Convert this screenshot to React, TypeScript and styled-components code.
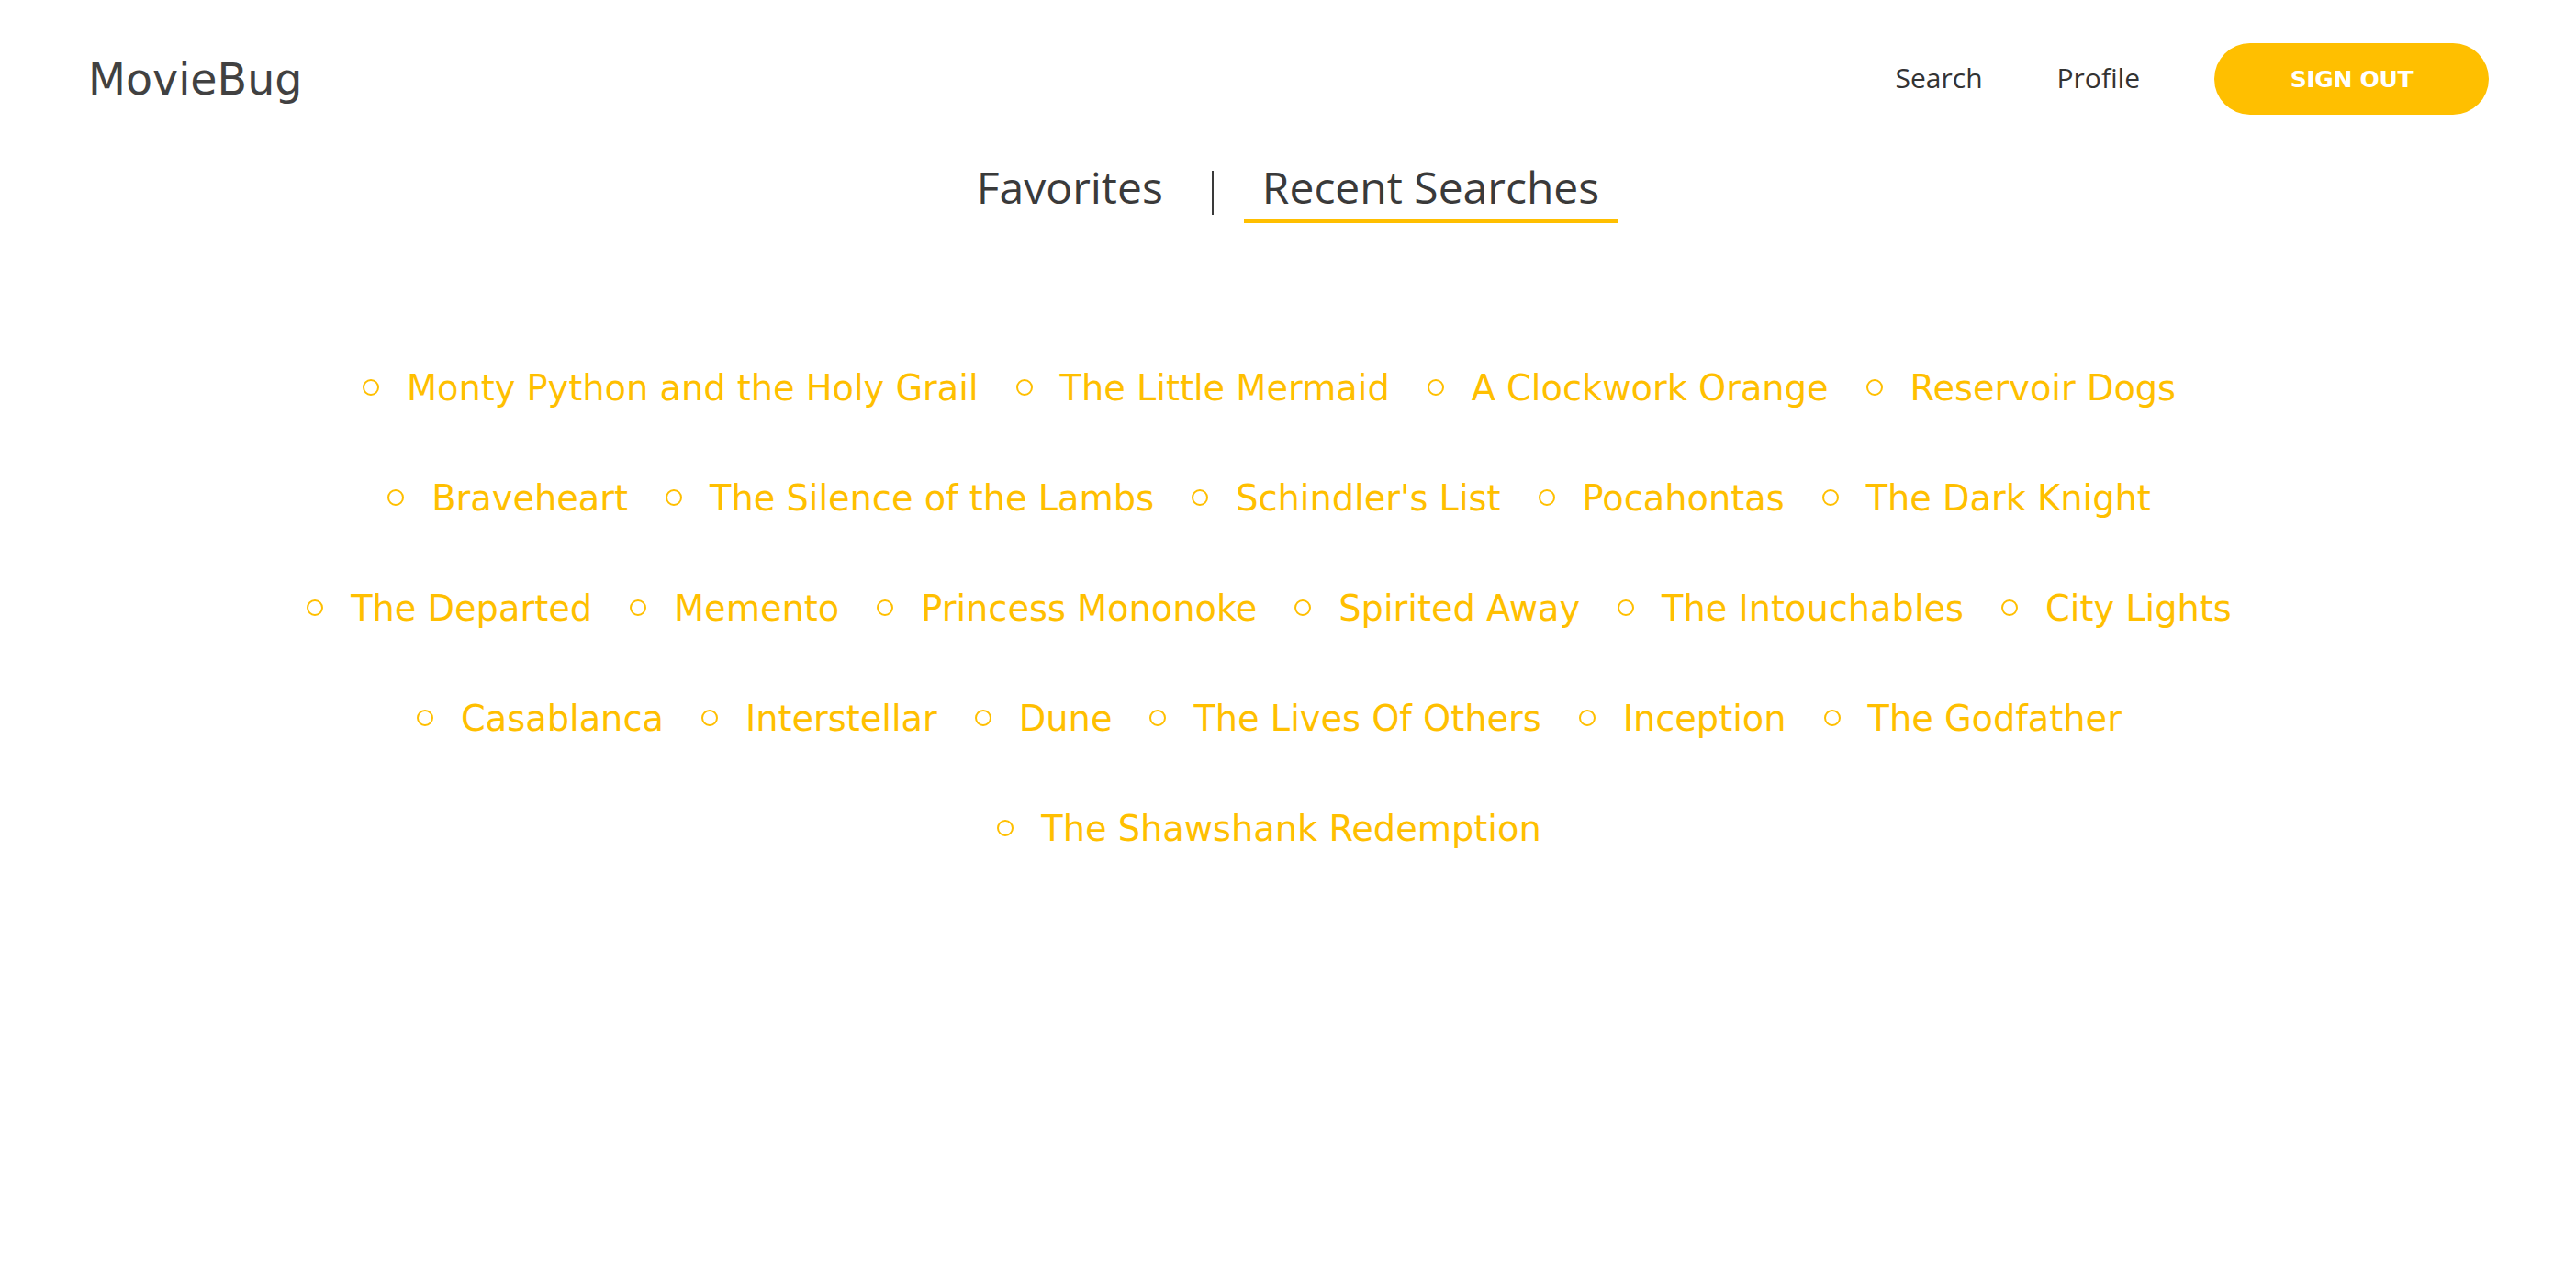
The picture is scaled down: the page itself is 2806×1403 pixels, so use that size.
import React from "react";
import styled, { createGlobalStyle } from "styled-components";

const GlobalStyle = createGlobalStyle`
  html, body {
    margin: 0;
    padding: 0;
    background: #ffffff;
  }
  body {
    font-family: "Open Sans", "Noto Sans", sans-serif;
    color: #3d3d3d;
  }
  * { box-sizing: border-box; }
`;

const YELLOW = "#ffbf00";

const Page = styled.div`
  min-height: 1403px;
  background: #ffffff;
`;

const Header = styled.header`
  display: flex;
  align-items: center;
  justify-content: space-between;
  height: 78px;
  margin-top: 47px;
  padding: 0 95px 0 96px;
`;

const Logo = styled.div`
  font-family: "DejaVu Sans", sans-serif;
  font-size: 47.5px;
  color: #414141;
`;

const Nav = styled.nav`
  display: flex;
  align-items: center;
  gap: 81px;
`;

const NavLink = styled.a`
  font-family: "Open Sans", sans-serif;
  font-size: 30px;
  line-height: 36px;
  margin-top: -3px;
  color: #333333;
  text-decoration: none;
  cursor: pointer;
`;

const SignOut = styled.button`
  width: 299px;
  height: 78px;
  border: none;
  border-radius: 39px;
  background: ${YELLOW};
  color: #ffffff;
  font-family: "DejaVu Sans", sans-serif;
  font-weight: 700;
  font-size: 25px;
  letter-spacing: -0.3px;
  cursor: pointer;
`;

const Tabs = styled.div`
  display: flex;
  justify-content: center;
  align-items: center;
  gap: 33px;
  margin-top: 47px;
`;

const Tab = styled.div<{ $active?: boolean }>`
  font-family: "Open Sans", sans-serif;
  font-size: 48px;
  line-height: 64px;
  color: #3a3a3a;
  padding: 0 20px 3px;
  border-bottom: 4px solid ${(p) => (p.$active ? YELLOW : "transparent")};
  cursor: pointer;
`;

const Divider = styled.span`
  width: 2px;
  height: 48px;
  margin-top: 4px;
  background: #3a3a3a;
`;

const List = styled.ul`
  list-style: none;
  margin: 120px 0 0;
  padding: 0;
  display: flex;
  flex-direction: column;
`;

const Row = styled.li`
  display: flex;
  justify-content: center;
`;

const Item = styled.span`
  display: flex;
  align-items: center;
  gap: 30px;
  margin-right: 41px;
  font-family: "DejaVu Sans", sans-serif;
  font-size: 38.3px;
  line-height: 120px;
  color: ${YELLOW};
  white-space: nowrap;
  cursor: pointer;

  &::before {
    content: "";
    display: block;
    width: 14px;
    height: 14px;
    margin-top: -3px;
    border: 2px solid ${YELLOW};
    border-radius: 50%;
  }
`;

const rows: string[][] = [
  ["Monty Python and the Holy Grail", "The Little Mermaid", "A Clockwork Orange", "Reservoir Dogs"],
  ["Braveheart", "The Silence of the Lambs", "Schindler's List", "Pocahontas", "The Dark Knight"],
  ["The Departed", "Memento", "Princess Mononoke", "Spirited Away", "The Intouchables", "City Lights"],
  ["Casablanca", "Interstellar", "Dune", "The Lives Of Others", "Inception", "The Godfather"],
  ["The Shawshank Redemption"],
];

export default function App() {
  return (
    <Page>
      <GlobalStyle />
      <Header>
        <Logo>MovieBug</Logo>
        <Nav>
          <NavLink>Search</NavLink>
          <NavLink>Profile</NavLink>
          <SignOut>SIGN OUT</SignOut>
        </Nav>
      </Header>
      <Tabs>
        <Tab>Favorites</Tab>
        <Divider />
        <Tab $active>Recent Searches</Tab>
      </Tabs>
      <List>
        {rows.map((row, i) => (
          <Row key={i}>
            {row.map((title) => (
              <Item key={title}>{title}</Item>
            ))}
          </Row>
        ))}
      </List>
    </Page>
  );
}
